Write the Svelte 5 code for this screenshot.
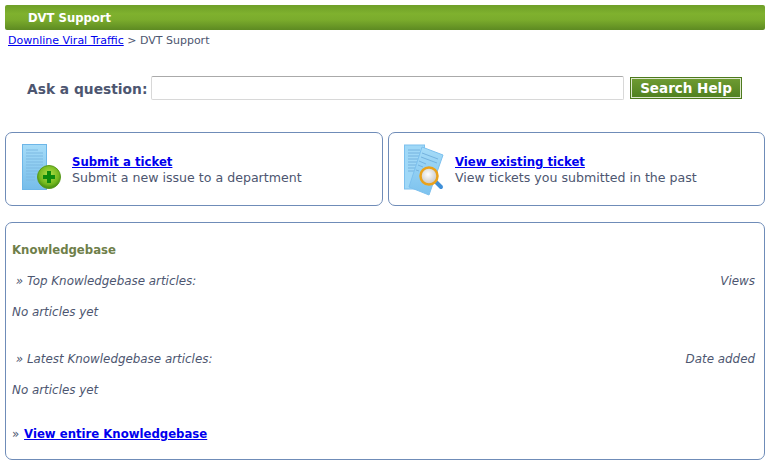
<script>
	const actions = [
		{ title: 'Submit a ticket', text: 'Submit a new issue to a department', icon: 'add' },
		{ title: 'View existing ticket', text: 'View tickets you submitted in the past', icon: 'view' }
	];
</script>

<div class="page">
	<div class="titlebar">DVT Support</div>
	<div class="crumbs"><a href="#top">Downline Viral Traffic</a> &gt; DVT Support</div>

	<form class="search">
		<label for="q">Ask a question:</label>
		<input id="q" type="text" />
		<button type="button">Search Help</button>
	</form>

	<div class="actions">
		{#each actions as action}
			<div class="box action">
				{#if action.icon === 'add'}
					<svg class="icon" width="44" height="50" viewBox="0 0 44 50">
						<defs>
							<linearGradient id="sheet" x1="0" y1="0" x2="0" y2="1">
								<stop offset="0" stop-color="#a6dcf8" />
								<stop offset="1" stop-color="#76bdea" />
							</linearGradient>
							<radialGradient id="ball" cx="0.5" cy="0.4" r="0.6">
								<stop offset="0" stop-color="#b4e24a" />
								<stop offset="0.7" stop-color="#74b81f" />
								<stop offset="1" stop-color="#3f8a12" />
							</radialGradient>
						</defs>
						<rect x="1.500" y="0.500" width="24" height="45" fill="url(#sheet)" stroke="#6db6e8" />
						<path d="M5 6h12M5 9h17M5 12h17M5 15h17M5 18h17M5 21h17M5 24h17M5 27h17M5 30h12M5 33h9M5 36h9" stroke="#7cb9e2" stroke-width="1" />
						<circle cx="28" cy="33" r="11.500" fill="url(#ball)" stroke="#5a9a1c" />
						<path d="M26 27h4v4h4v4h-4v4h-4v-4h-4v-4h4z" fill="#0d8a0d" />
					</svg>
				{:else}
					<svg class="icon" width="44" height="50" viewBox="0 0 44 50">
						<defs>
							<linearGradient id="sheet2" x1="0" y1="0" x2="0" y2="1">
								<stop offset="0" stop-color="#a6dcf8" />
								<stop offset="1" stop-color="#7cc2ee" />
							</linearGradient>
							<radialGradient id="lens" cx="0.45" cy="0.4" r="0.6">
								<stop offset="0" stop-color="#ffffff" />
								<stop offset="1" stop-color="#c4c4c4" />
							</radialGradient>
						</defs>
						<rect x="0.500" y="1" width="20" height="44" fill="#9fd8f7" stroke="#7cc0ee" />
						<path d="M4 6h12M4 9h14M4 12h14M4 15h14M4 18h14M4 21h12M4 24h10M4 27h9" stroke="#74b2de" />
						<path d="M18 3 L39 11 L25 51 L5 43 Z" fill="url(#sheet2)" stroke="#7cc0ee" />
						<path d="M18 9l16 6M17 13l16 6M15 17l7 3M14 21l5 2M12 26l3 1" stroke="#74b2de" />
						<path d="M32 38l5 5" stroke="#3f8fd8" stroke-width="4" stroke-linecap="round" />
						<circle cx="25" cy="32" r="8.500" fill="url(#lens)" stroke="#e9a21c" stroke-width="2.500" />
					</svg>
				{/if}
				<div class="copy">
					<a href="#top">{action.title}</a>
					<span>{action.text}</span>
				</div>
			</div>
		{/each}
	</div>

	<div class="box kb">
		<h2>Knowledgebase</h2>
		<div class="kb-head"><span>&nbsp;» Top Knowledgebase articles:</span><span>Views</span></div>
		<p>No articles yet</p>
		<div class="kb-head second"><span>&nbsp;» Latest Knowledgebase articles:</span><span>Date added</span></div>
		<p>No articles yet</p>
		<div class="kb-all">» <a href="#top">View entire Knowledgebase</a></div>
	</div>
</div>

<style>
	:global(body) {
		background: #fff;
	}

	.page {
		padding: 5px 6px 0 5px;
		font-family: "DejaVu Sans", Verdana, sans-serif;
		font-size: 12px;
		color: #4d5670;
		width: 760px;
	}

	a {
		color: #0000ee;
	}

	.titlebar {
		height: 25px;
		line-height: 26px;
		padding-left: 23px;
		border-radius: 2px;
		background: linear-gradient(#6e9f28 0, #7fb12e 35%, #7aab2c 60%, #5d8a22 100%);
		color: #fff;
		font-weight: bold;
		font-size: 11.600px;
	}

	.crumbs {
		margin: 5px 0 0 3px;
		font-size: 11px;
		line-height: 12px;
	}

	.search {
		display: flex;
		align-items: center;
		margin-top: 29px;
		padding-left: 22px;
		height: 24px;
	}

	label {
		font-weight: bold;
		font-size: 13.800px;
		width: 124px;
		white-space: nowrap;
		position: relative;
		top: 1px;
	}

	input {
		box-sizing: border-box;
		width: 473px;
		height: 24px;
		border: 1px solid #d8d8d8;
		border-top-color: #aaa;
		border-radius: 2px;
		padding: 0;
		margin: 0;
		outline: none;
	}

	button {
		box-sizing: border-box;
		width: 112px;
		height: 22px;
		margin-left: 6px;
		padding: 0;
		border: 1px solid #4e7a1e;
		box-shadow: inset 0 0 0 1px #dfe9cf;
		background: linear-gradient(#6f9c32, #4f8020);
		color: #fff;
		font-family: inherit;
		font-weight: bold;
		font-size: 13.500px;
	}

	.actions {
		display: grid;
		grid-template-columns: 378px 377px;
		gap: 5px;
		margin-top: 32px;
	}

	.box {
		box-sizing: border-box;
		border: 1px solid #6f8cb8;
		border-radius: 7px;
	}

	.action {
		display: flex;
		align-items: center;
		height: 74px;
		padding-left: 15px;
	}

	.icon {
		flex: none;
		margin-right: 7px;
		overflow: visible;
	}

	.copy {
		display: flex;
		flex-direction: column;
		margin-top: 2px;
		line-height: 16px;
		font-size: 12.600px;
	}

	.copy a {
		font-weight: bold;
		font-size: 11.700px;
	}

	.kb {
		height: 238px;
		margin-top: 16px;
		padding: 20px 9px 0 6px;
		font-size: 11.900px;
		font-style: italic;
	}

	h2 {
		margin: 0;
		font-size: 11.700px;
		line-height: 15px;
		font-weight: bold;
		font-style: normal;
		color: #6f7f4a;
	}

	.kb-head {
		display: flex;
		justify-content: space-between;
		margin-top: 16px;
		line-height: 15px;
	}

	.kb-head.second {
		margin-top: 32px;
	}

	p {
		margin: 16px 0 0;
		line-height: 15px;
	}

	.kb-all {
		margin-top: 29px;
		line-height: 15px;
		font-style: normal;
	}

	.kb-all a {
		font-weight: bold;
		margin-left: 1px;
		font-size: 11.700px;
	}
</style>
